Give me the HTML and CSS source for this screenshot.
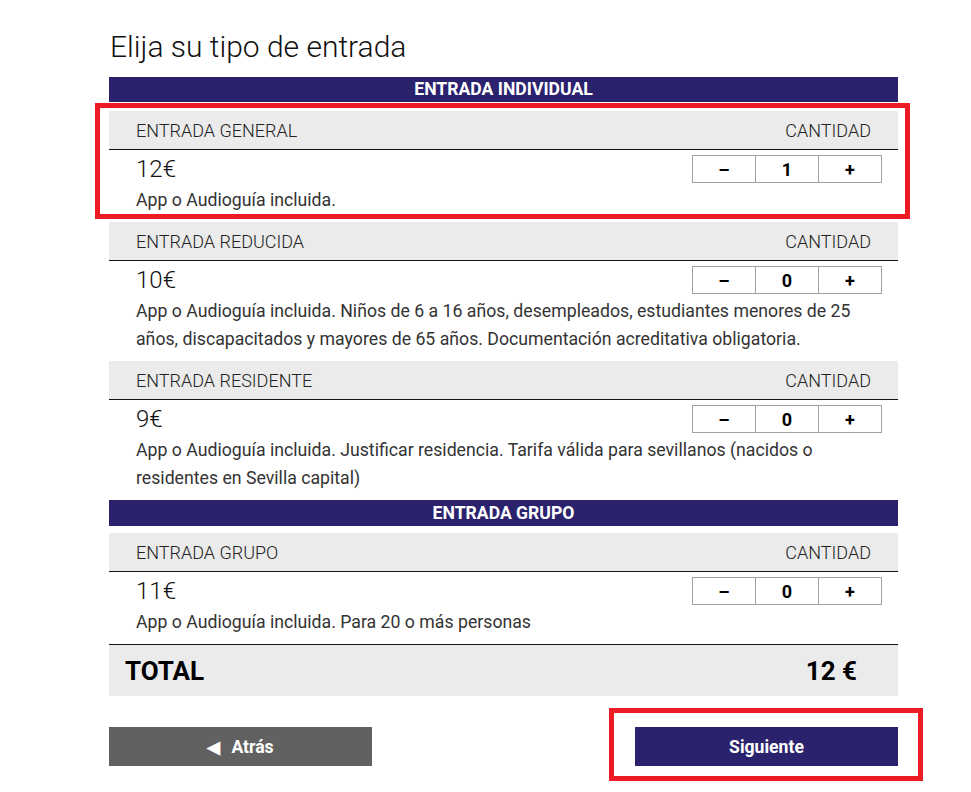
FILE: index.html
```html
<!DOCTYPE html>
<html lang="es">
<head>
<meta charset="utf-8">
<title>Elija su tipo de entrada</title>
<link rel="stylesheet" href="styles.css">
</head>
<body>
<main class="page">
  <h1 class="title">Elija su tipo de entrada</h1>

  <div class="section-bar">ENTRADA INDIVIDUAL</div>

  <div class="ticket highlighted">
    <div class="ticket-head"><span>ENTRADA GENERAL</span><span>CANTIDAD</span></div>
    <div class="ticket-body">
      <div class="ticket-top">
        <span class="price">12€</span>
        <div class="counter"><button class="cbtn">–</button><span class="cval">1</span><button class="cbtn">+</button></div>
      </div>
      <p class="desc">App o Audioguía incluida.</p>
    </div>
  </div>

  <div class="ticket">
    <div class="ticket-head"><span>ENTRADA REDUCIDA</span><span>CANTIDAD</span></div>
    <div class="ticket-body">
      <div class="ticket-top">
        <span class="price">10€</span>
        <div class="counter"><button class="cbtn">–</button><span class="cval">0</span><button class="cbtn">+</button></div>
      </div>
      <p class="desc">App o Audioguía incluida. Niños de 6 a 16 años, desempleados, estudiantes menores de 25 años, discapacitados y mayores de 65 años. Documentación acreditativa obligatoria.</p>
    </div>
  </div>

  <div class="ticket">
    <div class="ticket-head"><span>ENTRADA RESIDENTE</span><span>CANTIDAD</span></div>
    <div class="ticket-body">
      <div class="ticket-top">
        <span class="price">9€</span>
        <div class="counter"><button class="cbtn">–</button><span class="cval">0</span><button class="cbtn">+</button></div>
      </div>
      <p class="desc">App o Audioguía incluida. Justificar residencia. Tarifa válida para sevillanos (nacidos o residentes en Sevilla capital)</p>
    </div>
  </div>

  <div class="section-bar second">ENTRADA GRUPO</div>

  <div class="ticket">
    <div class="ticket-head"><span>ENTRADA GRUPO</span><span>CANTIDAD</span></div>
    <div class="ticket-body">
      <div class="ticket-top">
        <span class="price">11€</span>
        <div class="counter"><button class="cbtn">–</button><span class="cval">0</span><button class="cbtn">+</button></div>
      </div>
      <p class="desc">App o Audioguía incluida. Para 20 o más personas</p>
    </div>
  </div>

  <div class="total"><span>TOTAL</span><span>12 €</span></div>

  <div class="actions">
    <div class="btn-wrap"><button class="btn back"><span class="tri">◀</span>Atrás</button></div>
    <div class="btn-wrap highlighted"><button class="btn next">Siguiente</button></div>
  </div>
</main>
</body>
</html>
```

FILE: styles.css
```css
* { box-sizing: border-box; }

html, body {
  min-height: 100%;
}

body {
  margin: 0;
  background: #ffffff;
  font-family: Roboto, "Liberation Sans", Arial, sans-serif;
  color: #222;
}

.page {
  width: 789px;
  margin-left: 109px;
  padding-top: 28px;
  padding-bottom: 30px;
}

.title {
  margin: 0 0 11px 1px;
  font-weight: 300;
  font-size: 30px;
  line-height: 38px;
  color: #111;
}

.section-bar {
  background: #2b226e;
  color: #fff;
  font-weight: 700;
  font-size: 17.6px;
  height: 25px;
  line-height: 25px;
  text-align: center;
  margin-bottom: 9px;
}

.section-bar.second {
  height: 26px;
  line-height: 26px;
  margin-bottom: 7px;
}

.ticket { position: relative; }

.ticket.highlighted::after {
  content: "";
  position: absolute;
  left: -14px;
  right: -12px;
  top: -8px;
  bottom: 3px;
  border: 5px solid #ed1c24;
  pointer-events: none;
}

.ticket-head {
  display: flex;
  justify-content: space-between;
  align-items: center;
  background: #ebebeb;
  height: 39px;
  padding: 0 27px;
  border-bottom: 1px solid #111;
  font-weight: 300;
  font-size: 18px;
  color: #222;
}

.ticket-body {
  padding: 5px 16px 8px 27px;
}

.ticket-top {
  display: flex;
  justify-content: space-between;
  align-items: center;
  height: 28px;
}

.price {
  font-weight: 300;
  font-size: 24px;
  color: #111;
}

.counter {
  display: flex;
  height: 28px;
  border: 1px solid #a0a0a0;
}

.cbtn, .cval {
  display: flex;
  align-items: center;
  justify-content: center;
  font-family: Roboto, "Liberation Sans", Arial, sans-serif;
  font-weight: 700;
  font-size: 18px;
  color: #000;
  background: #fff;
  border: 0;
  padding: 0;
  margin: 0;
}

.cbtn { width: 62px; }
.cval {
  width: 64px;
  border-left: 1px solid #a0a0a0;
  border-right: 1px solid #a0a0a0;
}

.desc {
  margin: 3px 0 0 0;
  font-size: 17.7px;
  line-height: 28px;
  color: #333;
  padding-right: 20px;
}

.total {
  display: flex;
  justify-content: space-between;
  align-items: center;
  height: 52px;
  border-top: 1px solid #111;
  background: #ebebeb;
  padding: 0 41px 0 16px;
  font-weight: 700;
  font-size: 26px;
  color: #000;
}

.actions {
  display: flex;
  justify-content: space-between;
  margin-top: 31px;
}

.btn-wrap {
  position: relative;
  width: 263px;
  height: 39px;
}

.btn-wrap.highlighted::after {
  content: "";
  position: absolute;
  left: -26px;
  right: -25px;
  top: -19px;
  bottom: -15px;
  border: 5px solid #ed1c24;
  pointer-events: none;
}

.btn {
  display: flex;
  align-items: center;
  justify-content: center;
  width: 100%;
  height: 100%;
  border: 0;
  color: #fff;
  font-family: Roboto, "Liberation Sans", Arial, sans-serif;
  font-weight: 700;
  font-size: 17.6px;
  cursor: pointer;
}

.btn.back { background: #616161; }
.btn.next { background: #2b226e; }

.tri {
  font-size: 17px;
  margin-right: 11px;
}
```
